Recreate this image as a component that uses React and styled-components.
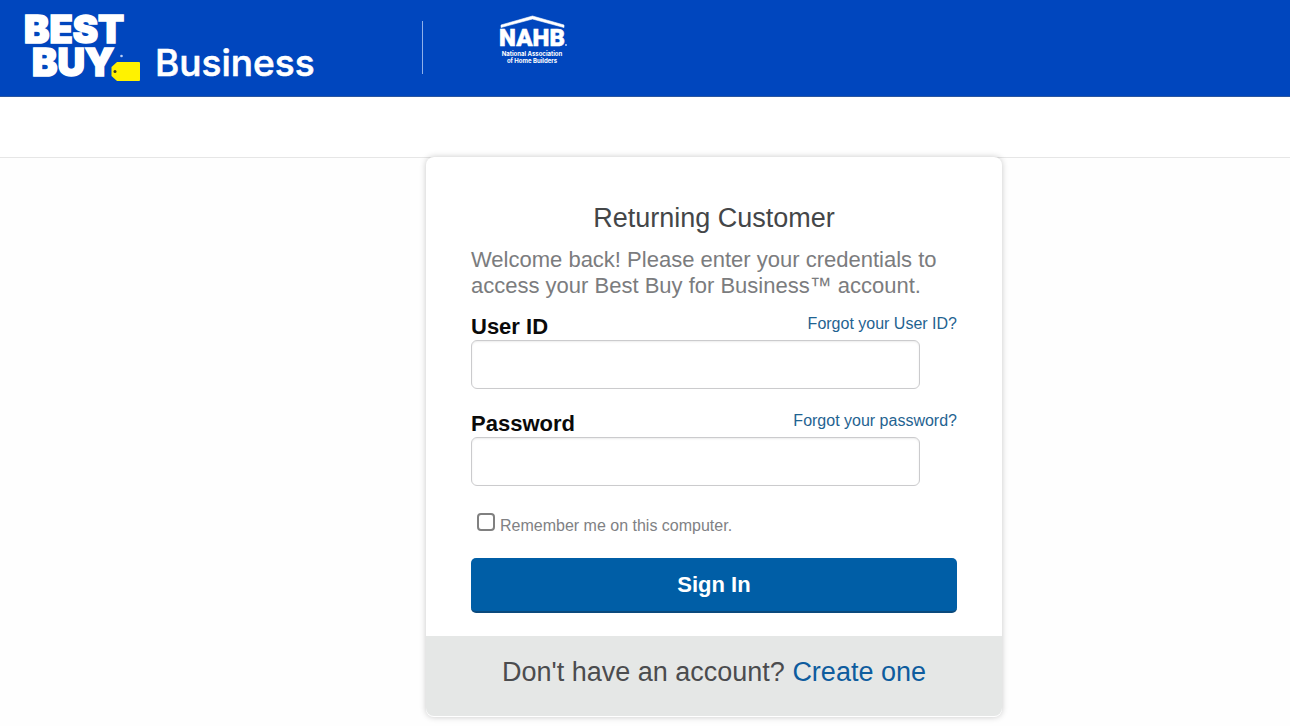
import { useState } from "react";
import styled, { createGlobalStyle } from "styled-components";

const GlobalStyle = createGlobalStyle`
  * {
    box-sizing: border-box;
  }

  body {
    margin: 0;
    background: #fefefe;
    font-family: "Liberation Sans", Arial, sans-serif;
  }
`;

const BestBuyLogo = () => (
  <svg width="322" height="96" viewBox="0 0 322 96" role="img" aria-label="Best Buy Business">
    <g
      fill="#fff"
      stroke="#fff"
      strokeWidth="1.6"
      fontFamily="Inter, sans-serif"
      fontSize="38"
      fontWeight="900"
    >
      <text x="24" y="43">BEST</text>
      <text x="32" y="76">BUY</text>
    </g>
    <circle cx="121.5" cy="56" r="1.3" fill="#b9cdf5" />
    <path d="M117 62h22q1 0 1 1v17q0 1-1 1h-22l-5.500-5v-9z" fill="#fff200" />
    <circle cx="115" cy="71.500" r="1.500" fill="#3a3a20" />
    <text
      x="155"
      y="76"
      fill="#fff"
      stroke="#fff"
      strokeWidth=".6"
      fontFamily="Inter, sans-serif"
      fontSize="37"
      fontWeight="500"
    >
      Business
    </text>
  </svg>
);

const NahbLogo = () => (
  <svg width="72" height="54" viewBox="0 0 72 54" role="img" aria-label="NAHB">
    <path d="M2 14.500V12L33.500 3 65 12v2.500L33.500 6z" fill="#fff" stroke="#fff" strokeWidth=".6" />
    <g fill="#fff" textAnchor="middle">
      <text
        x="33"
        y="33"
        fontFamily="Roboto, sans-serif"
        fontSize="24"
        fontWeight="900"
        stroke="#fff"
        strokeWidth=".5"
      >
        NAHB
      </text>
      <g fontFamily="Inter, sans-serif" fontSize="6" fontWeight="700">
        <text x="33" y="43">National Association</text>
        <text x="33" y="50">of Home Builders</text>
      </g>
    </g>
    <circle cx="67" cy="32" r="1" fill="#b9cdf5" />
  </svg>
);

const App = () => {
  const [userId, setUserId] = useState("");
  const [password, setPassword] = useState("");
  const [remember, setRemember] = useState(false);

  return (
    <>
      <GlobalStyle />
      <Header>
        <BestBuyLogo />
        <HeaderDivider />
        <NahbLogo />
      </Header>
      <SubHeader />

      <Main>
        <Card>
          <Form onSubmit={e => e.preventDefault()}>
            <Title>Returning Customer</Title>
            <Intro>
              Welcome back! Please enter your credentials to access your Best
              Buy for Business™ account.
            </Intro>

            <Field>
              <FieldHead>
                <Label htmlFor="userId">User ID</Label>
                <HelpLink href="#forgot-user">Forgot your User ID?</HelpLink>
              </FieldHead>
              <Input
                id="userId"
                type="text"
                value={userId}
                onChange={e => setUserId(e.target.value)}
              />
            </Field>

            <Field>
              <FieldHead>
                <Label htmlFor="password">Password</Label>
                <HelpLink href="#forgot-password">Forgot your password?</HelpLink>
              </FieldHead>
              <Input
                id="password"
                type="password"
                value={password}
                onChange={e => setPassword(e.target.value)}
              />
            </Field>

            <RememberRow>
              <Checkbox
                id="remember"
                type="checkbox"
                checked={remember}
                onChange={e => setRemember(e.target.checked)}
              />
              <RememberLabel htmlFor="remember">
                Remember me on this computer.
              </RememberLabel>
            </RememberRow>

            <SubmitButton type="submit">Sign In</SubmitButton>
          </Form>

          <CardFooter>
            Don't have an account? <CreateLink href="#create">Create one</CreateLink>
          </CardFooter>
        </Card>
      </Main>
    </>
  );
};

const Header = styled.header`
  display: flex;
  align-items: flex-start;
  height: 97px;
  background: #0046be;
  border-bottom: 1px solid #2a56a0;

  svg {
    display: block;
    flex-shrink: 0;
  }
`;

const HeaderDivider = styled.span`
  width: 1px;
  height: 53px;
  margin: 21px 76px 0 100px;
  background: #8fb0ea;

  & + svg {
    margin-top: 13px;
  }
`;

const SubHeader = styled.div`
  height: 61px;
  background: #fff;
  border-bottom: 1px solid #e6e6e6;
`;

const Main = styled.main`
  display: flex;
  justify-content: center;
  margin-top: -1px;
  padding: 0 0 9px 138px;
`;

const Card = styled.section`
  width: 100%;
  max-width: 576px;
  background: #fff;
  border-radius: 8px;
  border-bottom: 1px solid #fff;
  box-shadow: 0 0 6px rgba(0, 0, 0, 0.22);
`;

const Form = styled.form`
  display: flex;
  flex-direction: column;
  padding: 45px 45px 23px;
`;

const Title = styled.h1`
  margin: 0 0 13px;
  color: #444648;
  font-size: 27px;
  font-weight: 400;
  line-height: 32px;
  text-align: center;
`;

const Intro = styled.p`
  margin: 0 0 15px;
  color: #7b7c7e;
  font-size: 22px;
  line-height: 26px;
`;

const Field = styled.div`
  margin-bottom: 22px;
`;

const FieldHead = styled.div`
  display: flex;
  align-items: flex-start;
  justify-content: space-between;
`;

const Label = styled.label`
  color: #0a0a0a;
  font-size: 22px;
  font-weight: 700;
  line-height: 26px;
`;

const HelpLink = styled.a`
  color: #1f6391;
  font-size: 16px;
  line-height: 20px;
  text-decoration: none;

  &:hover {
    text-decoration: underline;
  }
`;

const Input = styled.input`
  display: block;
  width: 100%;
  max-width: 449px;
  height: 49px;
  padding: 0 12px;
  border: 1px solid #cbcbcd;
  border-radius: 6px;
  background: #fff;
  box-shadow: inset 0 1px 2px rgba(0, 0, 0, 0.08);
  font-family: inherit;
  font-size: 22px;
`;

const RememberRow = styled.div`
  display: flex;
  align-items: flex-start;
  gap: 5px;
  margin: 5px 0 22px 6px;
`;

const Checkbox = styled.input`
  appearance: none;
  width: 18px;
  height: 18px;
  margin: 0;
  border: 2px solid #808080;
  border-radius: 4px;
  background: #fff;

  &:checked {
    background: #005ea6;
  }
`;

const RememberLabel = styled.label`
  padding-top: 3px;
  color: #808184;
  font-size: 16px;
  line-height: 20px;
`;

const SubmitButton = styled.button`
  height: 55px;
  padding: 0;
  border: none;
  border-bottom: 2px solid #0b4a7d;
  border-radius: 5px;
  background: #005ea6;
  color: #fff;
  font-family: inherit;
  font-size: 22px;
  font-weight: 700;
  line-height: 26px;
  cursor: pointer;
`;

const CardFooter = styled.footer`
  padding: 20px 0 28px;
  border-radius: 0 0 8px 8px;
  background: #e5e7e6;
  color: #4b4c4e;
  font-size: 27px;
  line-height: 32px;
  text-align: center;
`;

const CreateLink = styled.a`
  color: #0e5c9e;
  text-decoration: none;

  &:hover {
    text-decoration: underline;
  }
`;

export default App;
